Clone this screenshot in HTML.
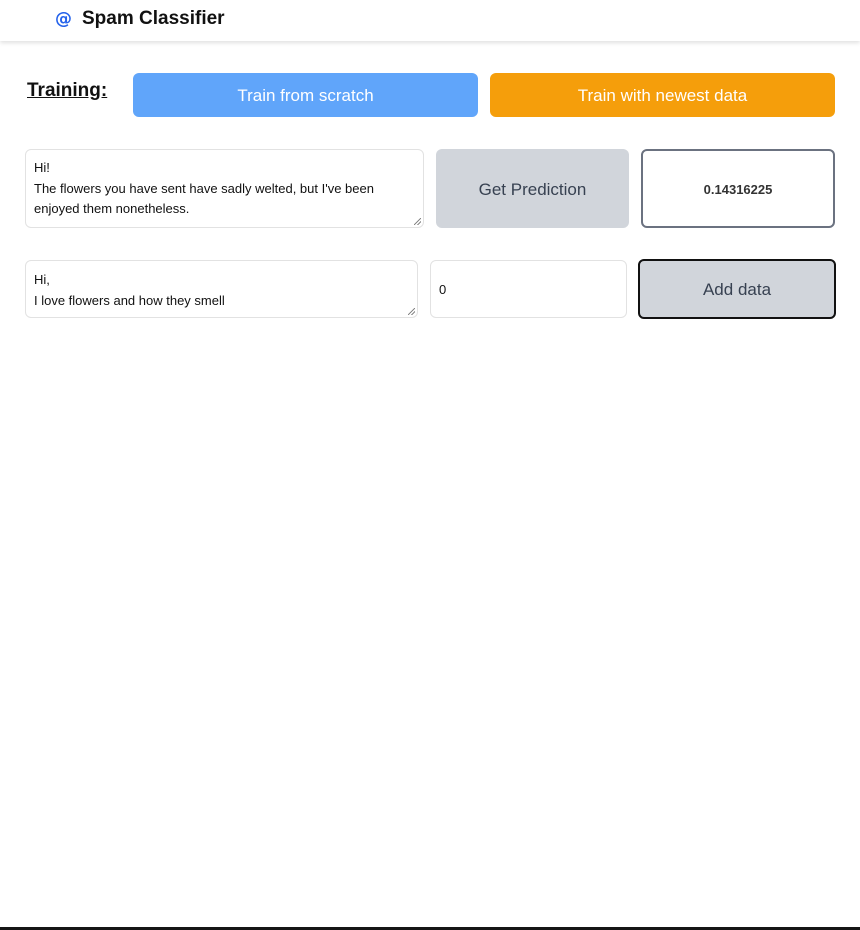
<!DOCTYPE html>
<html><head><meta charset="utf-8"><style>
*{box-sizing:border-box;margin:0;padding:0}
body{width:860px;height:930px;background:#fff;font-family:"Liberation Sans",sans-serif;position:relative;overflow:hidden}
.a{position:absolute}
.nav{left:0;top:0;width:860px;height:41px;background:#fff;box-shadow:0 2px 4px rgba(0,0,0,.12)}
.btn{display:flex;align-items:center;justify-content:center;border-radius:6px;padding-top:2px}
.ta{border:1px solid #e2e2e2;border-radius:6px;background:#fff;font-size:13px;color:#111;padding:9px 8px;line-height:20.5px}
.grip{position:absolute;right:2px;bottom:2px;width:7px;height:7px;background:linear-gradient(135deg,transparent 45%,#888 45%,#888 55%,transparent 55%,transparent 70%,#888 70%,#888 80%,transparent 80%)}
</style></head><body>
<div class="a nav">
  <div class="a" style="left:55px;top:9px;font-size:17px;font-weight:bold;color:#2563eb;font-family:'DejaVu Sans',sans-serif">@</div>
  <div class="a" style="left:82px;top:8px;font-size:19px;font-weight:bold;color:#111">Spam Classifier</div>
</div>
<div class="a" style="left:27px;top:80px;font-size:19px;font-weight:bold;text-decoration:underline;color:#111">Training:</div>
<div class="a btn" style="left:133px;top:73px;width:345px;height:44px;background:#60a5fa;color:#fff;font-size:17px">Train from scratch</div>
<div class="a btn" style="left:490px;top:73px;width:345px;height:44px;background:#f59e0b;color:#fff;font-size:17px">Train with newest data</div>

<div class="a ta" style="left:25px;top:149px;width:399px;height:79px;padding-top:8px">Hi!<br>The flowers you have sent have sadly welted, but I've been enjoyed them nonetheless.<div class="grip"></div></div>
<div class="a btn" style="left:436px;top:149px;width:193px;height:79px;background:#d1d5db;color:#374151;font-size:17px">Get Prediction</div>
<div class="a btn" style="left:641px;top:149px;width:194px;height:79px;border:2px solid #6b7280;font-size:13px;font-weight:bold;color:#333">0.14316225</div>

<div class="a ta" style="left:25px;top:260px;width:393px;height:58px">Hi,<br>I love flowers and how they smell<div class="grip"></div></div>
<div class="a ta" style="left:430px;top:260px;width:197px;height:58px;padding-top:19px">0</div>
<div class="a btn" style="left:638px;top:259px;width:198px;height:60px;background:#d1d5db;border:2px solid #111;color:#374151;font-size:17px">Add data</div>

<div class="a" style="left:0;top:927px;width:860px;height:3px;background:#151515"></div>
</body></html>
